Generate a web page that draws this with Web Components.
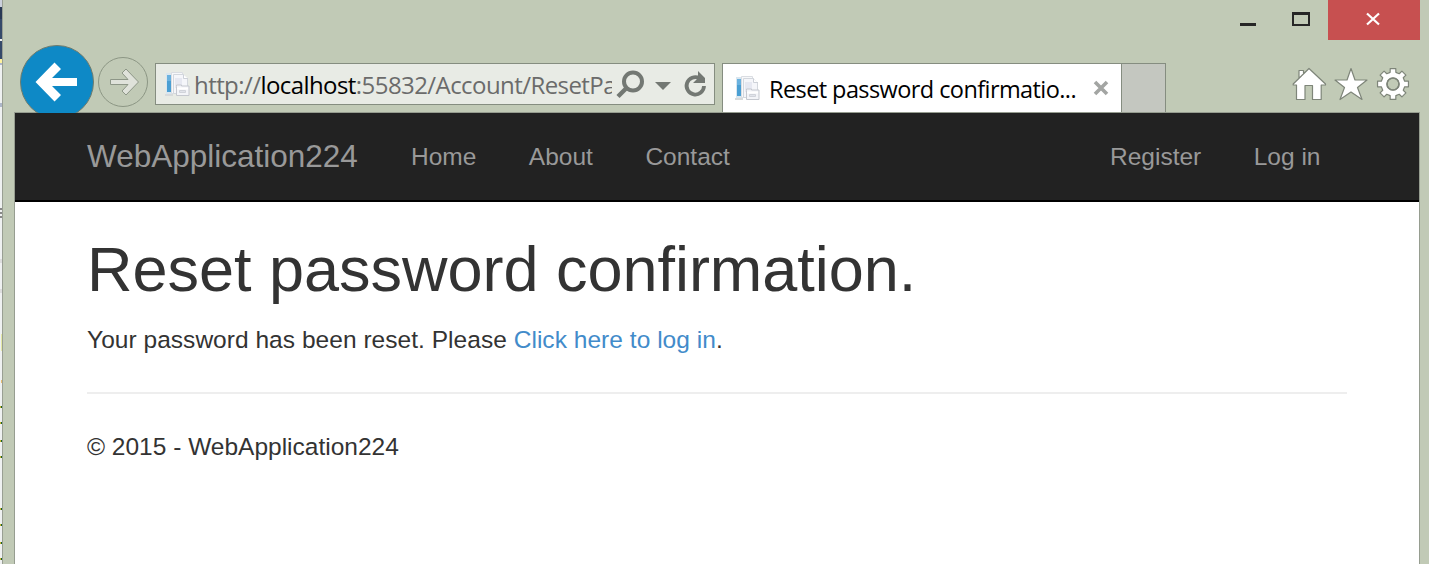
<!DOCTYPE html>
<html lang="en"><head><meta charset="utf-8"><title>Reset password confirmation</title>
<style>html,body{margin:0;height:100%;overflow:hidden}body{font-family:"Liberation Sans",Arial,sans-serif;font-variant-ligatures:none}</style></head>
<body><browser-window></browser-window>
<script>
function define(name, html){
  const t=document.createElement('template');t.innerHTML=html;
  customElements.define(name,class extends HTMLElement{
    constructor(){super();this.attachShadow({mode:'open'}).appendChild(t.content.cloneNode(true));}
  });
}
define('page-icon',`<style>:host{display:block;width:25px;height:25px}svg{display:block}</style>
<svg width="25" height="25" viewBox="0 0 25 25"><path d="M0 22h8v2H0z" fill="#d7dadb"/><path d="M1 1h6v21H1z" fill="#d9e6ef"/><path d="M2 3h4v17H2z" fill="#4a9fd3"/><path d="M2 3h4v6H2z" fill="#6ab2df"/>
<path d="M6.500.500h11v21h-11z" fill="#f7f8fa" stroke="#dadde2"/><path d="M8.500 2.500h10l4 4v15h-14z" fill="#f5f6fa" stroke="#d3d7dd"/><path d="M18.500 2.500v4H23" fill="#fff" stroke="#cdd1d8"/><path d="M10 6h7v10h-7z" fill="#e6e8f1"/>
<path d="M11.500 14.500v-1.500h5v1h7.500v9.500H11.500z" fill="#f3f4f8" stroke="#c5c8cf"/><path d="M12 15.500h11v2H12z" fill="#fff"/><path d="M14.500 18.500h6v2h-6z" fill="#e1e3ea" stroke="#d0d3da"/></svg>`);
define('desktop-edge',`<style>:host{display:block;width:2px;height:564px;overflow:hidden}svg{display:block}</style>
<svg width="2" height="564" shape-rendering="crispEdges"><path fill="#eff1f1" d="M0 0h2v564H0z"/><path fill="#cbd0dc" d="M0 0h2v7H0z"/><path fill="#293955" d="M0 7h2v12H0z"/><path fill="#35496a" d="M0 19h2v20H0zM0 41h2v18H0z"/><path fill="#fff29d" d="M0 59h2v4H0z"/><path fill="#adb6c9" d="M0 63h2v2H0zM0 103h2v4H0z"/><path fill="#888" d="M0 208h2v2H0zM0 212h2v2H0zM0 216h2v2H0z"/><path fill="#ddd" d="M0 259h2v4H0zM0 289h2v4H0z"/><path fill="#e4e8a5" d="M1 334h1v17H1z"/><path fill="#e9bc6f" d="M1 380h1v3H1z"/><path fill="#c7b32c" d="M0 406h2v2H0zM0 422h2v2H0zM0 440h2v2H0zM0 456h2v2H0zM0 508h2v2H0zM0 524h2v2H0zM0 542h2v2H0zM0 558h2v2H0z"/><path fill="#17602a" d="M1 406h1v2H1zM1 422h1v2H1zM1 440h1v2H1zM1 456h1v2H1zM1 508h1v2H1zM1 524h1v2H1zM1 542h1v2H1zM1 558h1v2H1z"/></svg>`);
define('title-bar',`<style>:host{display:flex;height:40px;justify-content:flex-end;padding-right:9px}
svg{display:block}.close{width:92px;height:40px;background:#c75050;display:grid;place-items:center}</style>
<svg width="88" height="40" shape-rendering="crispEdges"><path d="M0 23h16v3H0z" fill="#262626"/><path d="M52 12h18v14H52zM54 15v9h14v-9z" fill="#262626" fill-rule="evenodd"/></svg>
<div class="close"><svg width="92" height="40"><path d="M39 13.500l12 11M51 13.500l-12 11" stroke="#fff" stroke-width="2.200"/></svg></div>`);
define('nav-buttons',`<style>:host{display:block;width:138px;height:73px;overflow:hidden;position:relative;z-index:1}svg{display:block}</style>
<svg width="138" height="78"><circle cx="40" cy="42" r="36.500" fill="#0e89c6" stroke="#707c6d"/><path d="M18.500 42l19-19.500 6.500 6.500-9 9H60v8H35l9 9-6.500 6.500z" fill="#fff"/>
<circle cx="106" cy="42" r="24.500" fill="none" stroke="#8c9684"/><path d="M93.500 39.500h17.500l-6-6.500 4-4 12.500 13-12.500 13-4-4 6-6.500H93.500z" fill="#dfe2da" stroke="#8d9687"/></svg>`);
define('address-bar',`<style>:host{display:flex;box-sizing:border-box;width:560px;height:42px;margin-top:23px;border:1px solid #858d80;background:#e8ebe5;padding-left:9px;font:24px/40px "Open Sans","Noto Sans",sans-serif;color:#6b6b6b}
page-icon{margin-top:8px;flex:none}.url{width:418px;margin-left:4px;overflow:hidden;white-space:nowrap;letter-spacing:-.57px;flex:none;padding-top:1px;height:39px}.url b{font-weight:400;color:#000}svg{display:block;flex:none}</style>
<page-icon></page-icon><div class="url">http://<b>localhost</b>:55832/Account/ResetPa</div>
<svg width="102" height="40"><g fill="none" stroke="#737873"><circle cx="21" cy="17.500" r="9" stroke-width="4"/><path d="M14.500 24l-8.500 8.500" stroke-width="4.500"/><path d="M87.500 14.200A8.700 8.700 0 1 0 92 22" stroke-width="3.800"/></g><path d="M43 18h16l-8 8zM86 7l7 7v5H81l5-5z" fill="#737873"/></svg>`);
define('browser-tab',`<style>:host{display:flex;box-sizing:border-box;width:400px;height:49px;margin:23px 0 0 7px;border:1px solid #858d80;border-bottom:0;background:#fff;padding-left:12px;font:23.500px/51px "Open Sans","Noto Sans",sans-serif;color:#000}
page-icon{margin-top:12px;flex:none}.label{width:311px;margin-left:9px;white-space:nowrap;flex:none;letter-spacing:-.58px}svg{display:block;margin:15px 0 0 12px;flex:none}</style>
<page-icon></page-icon><div class="label"><slot></slot></div><svg width="18" height="18"><path d="M3 3l12 12M15 3l-12 12" stroke="#a3a5a3" stroke-width="3.600"/></svg>`);
define('tool-icons',`<style>:host{display:block;margin:26px 19px 0 auto;width:119px;height:36px}svg{display:block}</style>
<svg width="119" height="36" viewBox="0 0 119 36"><g fill="#fff" stroke="#7e8579" stroke-width="1.200" stroke-linejoin="round"><path d="M2.200 18L18 2.500 34.500 18v1h-4.300v14.500h-8.700v-14h-7.500v14H5.500V19H2.200zM8 12.500V4.500h4.500v4"/><path d="M60 2.500l4 11.500h12l-9.500 7.500L71 33.500l-11-7.500-11 7.500 4.500-12L44 14h12z"/>
<path id="gear" fill-rule="evenodd"/></g><circle cx="102" cy="18" r="6" fill="none" stroke="#7e8579" stroke-width="1.600"/></svg>`);
/* Gear outline: eight rectangular teeth around a ring. */
const gearPath=(cx,cy)=>{let d='';for(let i=0;i<8;i++){const a=i*Math.PI/4-Math.PI/2;
 for(const [r,o] of [[12,-.24],[15.700,-.18],[15.700,.18],[12,.24]])d+=(d?'L':'M')+(cx+r*Math.cos(a+o)).toFixed(2)+' '+(cy+r*Math.sin(a+o)).toFixed(2);}
 return d+`ZM${cx+6} ${cy}a6 6 0 1 0-12 0a6 6 0 1 0 12 0Z`;};
define('site-nav',`<style>:host{display:flex;box-sizing:border-box;height:89px;background:#222;border-bottom:2px solid #000;padding:0 98.500px 0 72px;color:#999;font-size:24.500px;line-height:87px;white-space:nowrap}
.brand{font-size:31.500px;width:324px}.l{display:flex;gap:52.500px}.r{display:flex;gap:52.500px;margin-left:auto}</style>
<div class="brand">WebApplication224</div><div class="l"><span>Home</span><span>About</span><span>Contact</span></div><div class="r"><span>Register</span><span>Log in</span></div>`);
define('page-content',`<style>:host{display:block;padding:0 72px;color:#333;font-size:24.500px;line-height:35px}
h2{font-weight:400;font-size:63px;line-height:69px;margin:33px 0 0;white-space:nowrap;letter-spacing:-.02px}p{margin:18px 0 0;letter-spacing:.035px}a{color:#428bca;text-decoration:none}hr{border:0;border-top:2px solid #eee;margin:35px 0}</style>
<h2>Reset password confirmation.</h2><p>Your password has been reset. Please <a>Click here to log in</a>.</p><hr><footer>© 2015 - WebApplication224</footer>`);
define('browser-window',`<style>:host{display:flex;width:1429px;height:564px;overflow:hidden;background:#c1cab6}
.frame{box-sizing:border-box;width:1427px;border-left:1px solid #999f93}.bar{display:flex;height:72px}.new{box-sizing:border-box;width:45px;height:49px;margin:23px 0 0 -1px;border:1px solid #858d80;border-bottom:0;background:#c4c7c0}
.page{box-sizing:border-box;width:1406px;height:452px;margin-left:11px;border:1px solid #969d90;border-bottom:0;background:#fff}nav-buttons{margin-left:14px}</style>
<desktop-edge></desktop-edge><div class="frame"><title-bar></title-bar><div class="bar"><nav-buttons></nav-buttons><address-bar></address-bar><browser-tab>Reset password confirmatio...</browser-tab><div class="new"></div><tool-icons></tool-icons></div><div class="page"><site-nav></site-nav><page-content></page-content></div></div>`);
document.querySelector('browser-window').shadowRoot.querySelector('tool-icons').shadowRoot.getElementById('gear').setAttribute('d',gearPath(102,18));
</script></body></html>
